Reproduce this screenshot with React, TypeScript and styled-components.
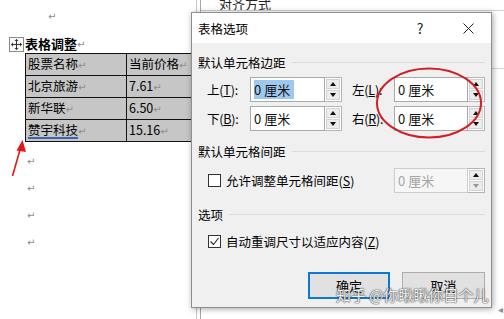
import React from "react";
import styled, { createGlobalStyle, css } from "styled-components";

const GlobalStyle = createGlobalStyle`
  html, body { margin: 0; padding: 0; background: #fff; }
  body { font-family: "Noto Sans CJK SC", "Noto Sans", sans-serif; }
`;

const Page = styled.div`
  position: relative;
  width: 504px;
  height: 319px;
  overflow: hidden;
  background: #fff;
  color: #000;
  font-size: 12.5px;
`;

/* ---------- document behind ---------- */

const Doc = styled.div`
  display: flex;
  flex-direction: column;
  align-items: flex-start;
  padding-top: 8px;
`;

const Mark = styled.span`
  font-family: "DejaVu Sans", sans-serif;
  font-size: 10px;
  color: #8c8c8c;
`;

const MarkLine = styled.div<{ indent: number; lh: number }>`
  padding-left: ${(p) => p.indent}px;
  line-height: ${(p) => p.lh}px;
  height: ${(p) => p.lh}px;
`;

const HeadRow = styled.div`
  display: flex;
  align-items: center;
  height: 14px;
  margin-top: 15px;
  padding-left: 9px;
`;

const MoveHandle = styled.div`
  width: 13px;
  height: 13px;
  border: 1px solid #8a8a8a;
  background: #fafafa;
  display: flex;
  align-items: center;
  justify-content: center;
  margin-right: 1px;
`;

const DocTitle = styled.span`
  font-weight: 700;
  font-size: 13px;
  line-height: 14px;
`;

const Table = styled.table`
  margin-top: 2px;
  margin-left: 25px;
  border-collapse: collapse;
  table-layout: fixed;
  width: 200px;
  font-size: 12.5px;
`;

const Cell = styled.td`
  width: 98px;
  height: 19px;
  padding: 0 0 0 2px;
  border: 1px solid #111;
  background: #c6c6c6;
  line-height: 19px;
  white-space: nowrap;
  overflow: hidden;
  vertical-align: middle;
`;

const Squiggle = styled.span`
  text-decoration: underline;
  text-decoration-color: #3e63b3;
  text-decoration-thickness: 1.5px;
  text-underline-offset: 2px;
`;

const MarksBlock = styled.div`
  margin-top: 4px;
`;

/* ---------- panel behind dialog ---------- */

const BackPanel = styled.div`
  position: absolute;
  left: 196px;
  top: 0;
  right: 0;
  bottom: 0;
  border-left: 1px solid #c9c9c9;
`;

const BackInner = styled.div`
  margin-left: 3px;
  height: 100%;
  border-left: 1px solid #a8a8a8;
  display: flex;
  flex-direction: column;
`;

const BackHeader = styled.div`
  height: 10px;
  padding-left: 18px;
  border-bottom: 1px solid #d0d0d0;
  font-size: 13px;
  line-height: 8px;
  color: #222;
  overflow: hidden;
`;

const BackRule = styled.div`
  margin-top: 57px;
  border-bottom: 1px solid #d6d6d6;
`;

const BackFoot = styled.div`
  margin-top: auto;
  align-self: flex-end;
  padding: 0 1px 2px 0;
`;

/* ---------- dialog ---------- */

const Dialog = styled.div`
  position: absolute;
  left: 191px;
  top: 12px;
  width: 299px;
  height: 294px;
  border: 1px solid #8f8f8f;
  box-shadow: 1px 1px 6px rgba(0, 0, 0, 0.35);
  display: flex;
  flex-direction: column;
  background: #f0f0f0;
`;

const TitleBar = styled.div`
  height: 30px;
  background: #fff;
  display: flex;
  align-items: center;
  padding-left: 6px;
`;

const TitleText = styled.span`
  font-size: 12.5px;
`;

const CaptionButton = styled.div<{ first?: boolean }>`
  width: 46px;
  height: 30px;
  display: flex;
  align-items: center;
  justify-content: center;
  font-size: 14px;
  color: #222;
  margin-left: ${(p) => (p.first ? "auto" : "2px")};
`;

const Body = styled.div`
  flex: 1;
  display: flex;
  flex-direction: column;
  padding: 0 6px;
`;

const GroupTitle = styled.div<{ top: number }>`
  display: flex;
  align-items: center;
  gap: 6px;
  height: 20px;
  margin-top: ${(p) => p.top}px;
  &::after {
    content: "";
    flex: 1;
    height: 1px;
    background: #dcdcdc;
  }
`;

const FieldRow = styled.div<{ top: number }>`
  display: flex;
  align-items: center;
  height: 25px;
  margin-top: ${(p) => p.top}px;
  padding-left: 9px;
`;

const FieldLabel = styled.span<{ w: number; gap?: number }>`
  width: ${(p) => p.w}px;
  flex: none;
  margin-left: ${(p) => p.gap ?? 0}px;
  white-space: nowrap;
  letter-spacing: -0.2px;
`;

const U = styled.span`
  text-decoration: underline;
  text-underline-offset: 1px;
`;

const SpinBox = styled.div<{ push?: boolean }>`
  display: flex;
  flex: none;
  height: 25px;
  ${(p) => p.push && css`margin-left: auto;`}
`;

const TextBox = styled.div<{ w: number; disabled?: boolean }>`
  width: ${(p) => p.w}px;
  box-sizing: border-box;
  border: 1px solid ${(p) => (p.disabled ? "#cdcdcd" : "#a9a9a9")};
  background: ${(p) => (p.disabled ? "#f6f6f6" : "#fff")};
  color: ${(p) => (p.disabled ? "#a3a3a3" : "#111")};
  font-size: 13px;
  display: flex;
  align-items: center;
  padding-left: 3px;
`;

const Selected = styled.span`
  background: #9dc9ef;
  color: #111;
  line-height: 19px;
  padding-right: 4px;
`;

const Spinner = styled.div`
  width: 17px;
  box-sizing: border-box;
  border: 1px solid #b4b4b4;
  border-left: none;
  display: flex;
  flex-direction: column;
  gap: 1px;
  padding: 1px;
  background: #fff;
`;

const SpinBtn = styled.div`
  flex: 1;
  background: #ececec;
  border: 1px solid #d2d2d2;
  display: flex;
  align-items: center;
  justify-content: center;
`;

const Tri = styled.div<{ down?: boolean; dim?: boolean }>`
  width: 0;
  height: 0;
  border-left: 3.5px solid transparent;
  border-right: 3.5px solid transparent;
  ${(p) =>
    p.down
      ? css`border-top: 4px solid ${p.dim ? "#9a9a9a" : "#111"};`
      : css`border-bottom: 4px solid ${p.dim ? "#9a9a9a" : "#111"};`}
`;

const CheckRow = styled.div<{ top: number; h: number }>`
  display: flex;
  align-items: center;
  height: ${(p) => p.h}px;
  margin-top: ${(p) => p.top}px;
  padding-left: 10px;
`;

const CheckBox = styled.div`
  width: 13px;
  height: 13px;
  flex: none;
  box-sizing: border-box;
  border: 1px solid #333;
  background: #fff;
  display: flex;
  align-items: center;
  justify-content: center;
  margin-right: 5px;
`;

const ButtonRow = styled.div`
  display: flex;
  justify-content: flex-end;
  gap: 12px;
  margin-top: 21px;
`;

const Button = styled.div<{ primary?: boolean; w: number }>`
  width: ${(p) => p.w}px;
  height: 27px;
  box-sizing: border-box;
  background: #e1e1e1;
  border: ${(p) => (p.primary ? "2px solid #0a78d4" : "1px solid #adadad")};
  display: flex;
  align-items: center;
  justify-content: center;
  font-size: 13px;
`;

/* ---------- annotations ---------- */

const Overlay = styled.svg`
  position: absolute;
  left: 0;
  top: 0;
  pointer-events: none;
`;

const Watermark = styled.div`
  position: absolute;
  left: 336px;
  top: 285px;
  font-size: 15px;
  line-height: 20px;
  color: rgba(255, 255, 255, 0.92);
  text-shadow: 0 0 1px #555, 0 0 1px #555, 0 0 2px rgba(0, 0, 0, 0.4);
  white-space: nowrap;
  pointer-events: none;
`;

function Spin({ dim }: { dim?: boolean }) {
  return (
    <Spinner>
      <SpinBtn>
        <Tri />
      </SpinBtn>
      <SpinBtn>
        <Tri down dim={dim} />
      </SpinBtn>
    </Spinner>
  );
}

const rows = [
  ["股票名称", "当前价格"],
  ["北京旅游", "7.61"],
  ["新华联", "6.50"],
  ["赞宇科技", "15.16"],
];

export default function App() {
  return (
    <>
      <GlobalStyle />
      <Page>
        <Doc>
          <MarkLine indent={48} lh={14}>
            <Mark>↵</Mark>
          </MarkLine>
          <HeadRow>
            <MoveHandle>
              <svg width="11" height="11" viewBox="0 0 11 11">
                <path d="M5.5 0.5v10M0.5 5.5h10" stroke="#333" strokeWidth="1" fill="none" />
                <path d="M5.5 0l-2 2h4zM5.5 11l-2-2h4zM0 5.5l2-2v4zM11 5.5l-2-2v4z" fill="#333" />
              </svg>
            </MoveHandle>
            <DocTitle>表格调整</DocTitle>
            <Mark>↵</Mark>
          </HeadRow>
          <Table>
            <tbody>
              {rows.map((r, i) => (
                <tr key={i}>
                  <Cell>
                    {i === 3 ? <Squiggle>{r[0]}</Squiggle> : r[0]}
                    <Mark>↵</Mark>
                  </Cell>
                  <Cell>
                    {r[1]}
                    <Mark>↵</Mark>
                  </Cell>
                </tr>
              ))}
            </tbody>
          </Table>
          <MarksBlock>
            {[0, 1, 2, 3].map((i) => (
              <MarkLine key={i} indent={27} lh={27}>
                <Mark>↵</Mark>
              </MarkLine>
            ))}
          </MarksBlock>
        </Doc>

        <BackPanel>
          <BackInner>
            <BackHeader>对齐方式</BackHeader>
            <BackRule />
            <BackFoot>
              <Mark>◂</Mark>
            </BackFoot>
          </BackInner>
        </BackPanel>

        <Dialog>
          <TitleBar>
            <TitleText>表格选项</TitleText>
            <CaptionButton first>?</CaptionButton>
            <CaptionButton>
              <svg width="11" height="11" viewBox="0 0 11 11">
                <path d="M0.5 0.5l10 10M10.5 0.5l-10 10" stroke="#222" strokeWidth="1" />
              </svg>
            </CaptionButton>
          </TitleBar>
          <Body>
            <GroupTitle top={9}>默认单元格边距</GroupTitle>
            <FieldRow top={5}>
              <FieldLabel w={43}>
                上(<U>T</U>):
              </FieldLabel>
              <SpinBox>
                <TextBox w={75}>
                  <Selected>0 厘米</Selected>
                </TextBox>
                <Spin />
              </SpinBox>
              <FieldLabel w={42} gap={10}>
                左(<U>L</U>):
              </FieldLabel>
              <SpinBox>
                <TextBox w={74}>0 厘米</TextBox>
                <Spin />
              </SpinBox>
            </FieldRow>
            <FieldRow top={4}>
              <FieldLabel w={43}>
                下(<U>B</U>):
              </FieldLabel>
              <SpinBox>
                <TextBox w={75}>0 厘米</TextBox>
                <Spin />
              </SpinBox>
              <FieldLabel w={42} gap={10}>
                右(<U>R</U>):
              </FieldLabel>
              <SpinBox>
                <TextBox w={74}>0 厘米</TextBox>
                <Spin />
              </SpinBox>
            </FieldRow>

            <GroupTitle top={10}>默认单元格间距</GroupTitle>
            <CheckRow top={7} h={25}>
              <CheckBox />
              <span>
                允许调整单元格间距(<U>S</U>)
              </span>
              <SpinBox push>
                <TextBox w={74} disabled>
                  0 厘米
                </TextBox>
                <Spin dim />
              </SpinBox>
            </CheckRow>

            <GroupTitle top={11}>选项</GroupTitle>
            <CheckRow top={7} h={20}>
              <CheckBox>
                <svg width="11" height="11" viewBox="0 0 11 11">
                  <path d="M1.5 5.5l3 3 5-6.5" stroke="#222" strokeWidth="1.1" fill="none" />
                </svg>
              </CheckBox>
              <span>
                自动重调尺寸以适应内容(<U>Z</U>)
              </span>
            </CheckRow>

            <ButtonRow>
              <Button primary w={82}>确定</Button>
              <Button w={83}>取消</Button>
            </ButtonRow>
          </Body>
        </Dialog>

        <Overlay width="504" height="319" viewBox="0 0 504 319">
          <ellipse cx="429" cy="103" rx="52" ry="34.5" fill="none" stroke="#d11f26" strokeWidth="2" />
          <line x1="12.5" y1="176" x2="20.5" y2="148" stroke="#e3161c" strokeWidth="1.6" />
          <path d="M22.5 140 L16.5 150.5 L26 152 Z" fill="#e3161c" />
        </Overlay>

        <Watermark>知乎 @你瞅瞅你目个儿</Watermark>
      </Page>
    </>
  );
}
